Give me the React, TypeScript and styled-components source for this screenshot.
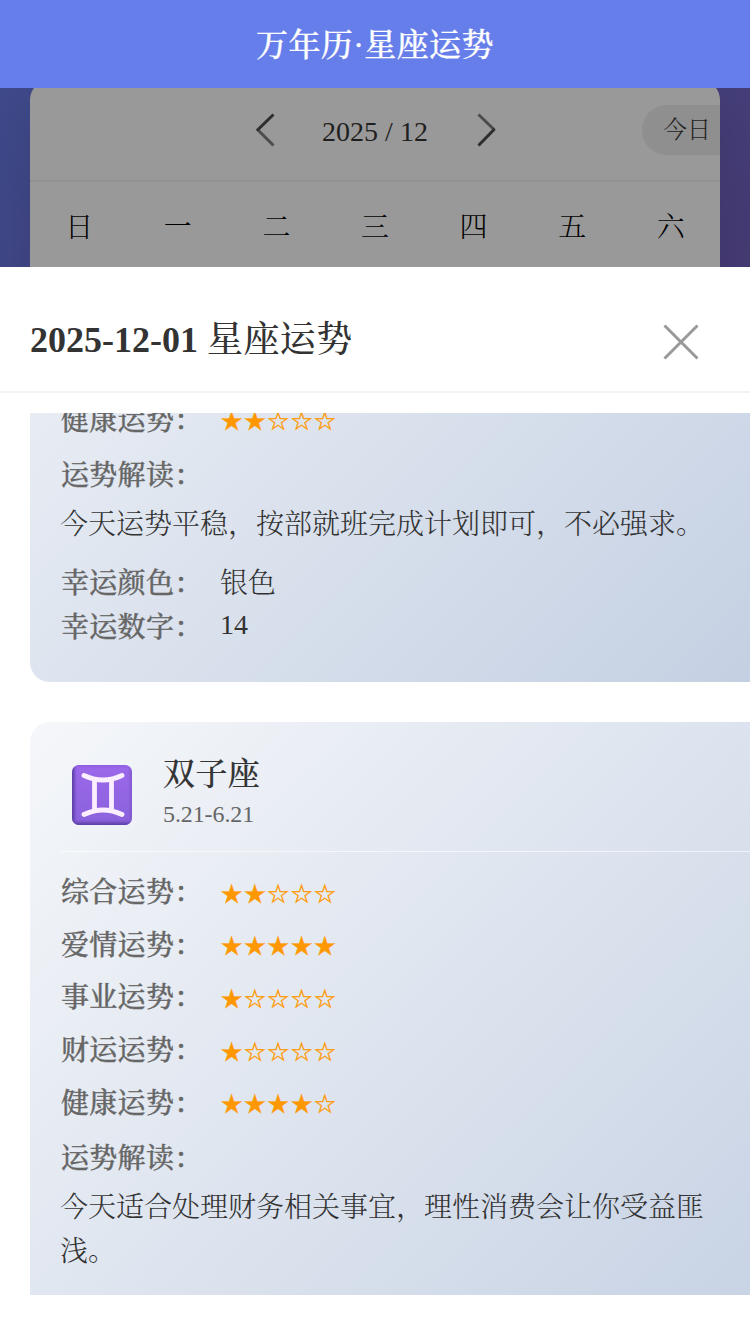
import React from "react";
import styled, { createGlobalStyle } from "styled-components";

const SERIF = `"Liberation Serif", "Noto Serif CJK SC", "Source Han Serif SC", "Noto Serif SC", "AR PL UMing CN", "Noto Sans CJK SC", serif`;

const GlobalStyle = createGlobalStyle`
  * { box-sizing: border-box; }
  body { margin: 0; background: #fff; font-family: ${SERIF}; font-weight: 300; overflow: hidden; }
`;

const Page = styled.div`
  width: 750px;
  height: 1334px;
  display: flex;
  flex-direction: column;
  overflow: hidden;
`;

const NavBar = styled.header`
  flex: none;
  height: 88px;
  padding-bottom: 4px;
  display: flex;
  align-items: center;
  justify-content: center;
  background: #667eea;
  color: #fff;
  font-size: 32px;
  font-weight: 500;
  letter-spacing: 0.4px;
  -webkit-text-stroke: 0.3px;
`;

const Backdrop = styled.div`
  flex: none;
  height: 179px;
  padding: 0 30px;
  overflow: hidden;
  background: linear-gradient(135deg, #3f4a8b 0%, #463b74 100%);
`;

const Calendar = styled.section`
  height: 300px;
  margin-top: -8px;
  border-radius: 20px;
  background: #999;
  overflow: hidden;
  box-shadow: 0 20px 60px rgba(0, 0, 0, 0.12);
`;

const MonthBar = styled.div`
  height: 102px;
  display: grid;
  grid-template-columns: 225px 242px 1fr;
  align-items: center;
  border-bottom: 2px solid #919191;
`;

const MonthNav = styled.div`
  display: flex;
  align-items: center;
  justify-content: space-between;
  font-size: 28px;
  color: #1f1f1f;
`;

const MonthText = styled.span`
  padding: 4px 2px 0 0;
`;

const TodayButton = styled.button`
  justify-self: end;
  width: 78px;
  height: 50px;
  padding: 0 0 6px 21px;
  border: 0;
  border-radius: 25px 0 0 25px;
  background: #8f8f8f;
  color: #1f1f1f;
  font: 300 24px ${SERIF};
  text-align: left;
  white-space: nowrap;
`;

const WeekRow = styled.div`
  display: grid;
  grid-template-columns: repeat(7, 1fr);
  height: 86px;
  align-items: center;
  text-align: center;
  font-size: 28px;
  color: #000;
`;

const Sheet = styled.main`
  flex: 1;
  min-height: 0;
  display: flex;
  flex-direction: column;
  background: #fff;
`;

const SheetHeader = styled.div`
  flex: none;
  height: 126px;
  padding: 25px 50px 0 30px;
  display: flex;
  align-items: center;
  justify-content: space-between;
  border-bottom: 2px solid #f3f3f3;
`;

const SheetTitle = styled.h1`
  margin: 0;
  padding-bottom: 11px;
  font-size: 36px;
  font-weight: 500;
  letter-spacing: 0.4px;
  color: #333;
`;

const DateText = styled.span`
  font-weight: 700;
  letter-spacing: 0;
`;

const CardScroller = styled.div`
  width: 720px;
  height: 882px;
  margin: 20px 0 0 30px;
  display: flex;
  flex-direction: column;
  gap: 40px;
  overflow: hidden;
`;

const Card = styled.article<{ $scrolled?: number }>`
  flex: none;
  width: 750px;
  margin-top: ${(p) => -(p.$scrolled ?? 0)}px;
  padding: 30px 30px 35px;
  border-radius: 20px;
  background: linear-gradient(135deg, #f5f7fa 0%, #c3cfe2 100%);
`;

const CardHead = styled.div`
  height: 100px;
  display: flex;
  border-bottom: 1px solid rgba(255, 255, 255, 0.6);
`;

const SignIcon = styled.div`
  width: 103px;
  padding: 13px 0 0 12px;
`;

const SignName = styled.div`
  font-size: 32px;
  font-weight: 500;
  letter-spacing: 0.4px;
  line-height: 44px;
  -webkit-text-stroke: 0.15px;
  color: #333;
`;

const SignDates = styled.div`
  font-size: 24px;
  line-height: 36px;
  letter-spacing: -0.1px;
  color: #666;
`;

const Ratings = styled.div`
  padding-top: 12px;
`;

const Row = styled.div<{ $h: number }>`
  display: flex;
  align-items: center;
  height: ${(p) => p.$h}px;
  font-size: 28px;
  color: #333;
`;

const Label = styled.span`
  width: 160px;
  padding-left: 1px;
  font-size: 28px;
  font-weight: 500;
  letter-spacing: 0.3px;
  -webkit-text-stroke: 0.35px;
  color: #666;
`;

const Stars = styled.span`
  padding-top: 7px;
  font-family: "DejaVu Sans", sans-serif;
  font-size: 26px;
  font-weight: 700;
  -webkit-text-stroke: 0.4px;
  color: #ff9800;
`;

const Reading = styled.p`
  margin: 0 0 12px;
  width: 660px;
  font-size: 28px;
  line-height: 44px;
  color: #333;
`;

type Sign = {
  name: string;
  dates: string;
  scores: number[];
  text: string;
  color: string;
  number: number;
};

const ASPECTS = ["综合运势", "爱情运势", "事业运势", "财运运势", "健康运势"];

const TAURUS: Sign = {
  name: "金牛座",
  dates: "4.20-5.20",
  scores: [3, 3, 4, 2, 2],
  text: "今天运势平稳，按部就班完成计划即可，不必强求。",
  color: "银色",
  number: 14,
};

const GEMINI: Sign = {
  name: "双子座",
  dates: "5.21-6.21",
  scores: [2, 5, 1, 1, 4],
  text: "今天适合处理财务相关事宜，理性消费会让你受益匪浅。",
  color: "蓝色",
  number: 7,
};

const GeminiIcon = () => (
  <svg width="60" height="60" viewBox="0 0 60 60" fill="none">
    <defs>
      <linearGradient id="tile" x1="0" y1="0" x2="0" y2="1">
        <stop offset="0" stopColor="#9b68ea" />
        <stop offset="1" stopColor="#8a62dc" />
      </linearGradient>
      <filter id="soft" x="-10%" y="-10%" width="120%" height="120%">
        <feGaussianBlur stdDeviation="1.5" />
      </filter>
      <clipPath id="round">
        <rect width="60" height="60" rx="7" />
      </clipPath>
    </defs>
    <g clipPath="url(#round)">
      <rect width="60" height="60" fill="url(#tile)" />
      <g filter="url(#soft)" strokeWidth="5">
        <path d="M0 0V60H60" stroke="#5b3da6" />
        <path d="M60 55V0" stroke="#7a55c4" strokeWidth="3" />
        <path d="M4 0H57" stroke="#8654dc" strokeWidth="2" />
      </g>
    </g>
    <g stroke="#fbeeff" strokeWidth="4.8" strokeLinecap="round">
      <path d="M12 10.5Q31 19.5 50 10.5M12 49.5Q31 40.5 50 49.5" />
      <path d="M22.5 15V45M39.5 15V45" strokeLinecap="butt" />
    </g>
  </svg>
);

const Arrow = ({ flip }: { flip?: boolean }) => (
  <svg width="20" height="34" viewBox="0 0 20 34" fill="none" strokeWidth="3">
    {flip ? (
      <>
        <path d="M1.5 1.5L17.5 17" stroke="#4c4c4c" />
        <path d="M17.5 16L1.5 32.5" stroke="#2e2e2e" />
      </>
    ) : (
      <>
        <path d="M2 16L18.5 32.5" stroke="#4c4c4c" />
        <path d="M18.5 1.5L2 17.5" stroke="#2e2e2e" />
      </>
    )}
  </svg>
);

const CloseIcon = () => (
  <svg width="38" height="38" viewBox="0 0 38 38" stroke="#999" strokeWidth="3">
    <path d="M2.5 2.5L35.5 35.5M35.5 2.5L2.5 35.5" />
  </svg>
);

const SignCard = ({ sign, scrolled }: { sign: Sign; scrolled?: number }) => (
  <Card $scrolled={scrolled}>
    <CardHead>
      <SignIcon>
        <GeminiIcon />
      </SignIcon>
      <div>
        <SignName>{sign.name}</SignName>
        <SignDates>{sign.dates}</SignDates>
      </div>
    </CardHead>
    <Ratings>
      {ASPECTS.map((a, i) => (
        <Row key={a} $h={52.6}>
          <Label>{a}：</Label>
          <Stars>{"★".repeat(sign.scores[i]) + "☆".repeat(5 - sign.scores[i])}</Stars>
        </Row>
      ))}
    </Ratings>
    <Row $h={59}>
      <Label>运势解读：</Label>
    </Row>
    <Reading>{sign.text}</Reading>
    <Row $h={44}>
      <Label>幸运颜色：</Label>
      {sign.color}
    </Row>
    <Row $h={44}>
      <Label>幸运数字：</Label>
      {sign.number}
    </Row>
  </Card>
);

export default function App() {
  return (
    <Page lang="zh-CN">
      <GlobalStyle />
      <NavBar>万年历·星座运势</NavBar>
      <Backdrop>
        <Calendar>
          <MonthBar>
            <span />
            <MonthNav>
              <Arrow />
              <MonthText>2025 / 12</MonthText>
              <Arrow flip />
            </MonthNav>
            <TodayButton>今日</TodayButton>
          </MonthBar>
          <WeekRow>
            {[..."日一二三四五六"].map((d) => (
              <span key={d}>{d}</span>
            ))}
          </WeekRow>
        </Calendar>
      </Backdrop>
      <Sheet>
        <SheetHeader>
          <SheetTitle>
            <DateText>2025-12-01 </DateText>
            星座运势
          </SheetTitle>
          <CloseIcon />
        </SheetHeader>
        <CardScroller>
          <SignCard sign={TAURUS} scrolled={374} />
          <SignCard sign={GEMINI} />
        </CardScroller>
      </Sheet>
    </Page>
  );
}
